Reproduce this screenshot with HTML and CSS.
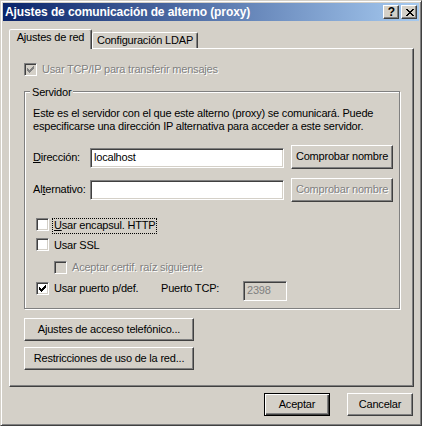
FILE: index.html
```html
<!DOCTYPE html>
<html lang="es">
<head>
<meta charset="utf-8">
<title>Ajustes de comunicación de alterno (proxy)</title>
<link rel="stylesheet" href="styles.css">
</head>
<body>
<div class="window">
  <div class="titlebar">
    <span class="title">Ajustes de comunicación de alterno (proxy)</span>
    <div class="cap-btns">
      <span class="cap-btn help">?</span>
      <span class="cap-btn close">
        <svg width="8" height="7" viewBox="0 0 8 7" shape-rendering="crispEdges"><path d="M0 0h2v1h-2zM6 0h2v1h-2zM1 1h2v1h-2zM5 1h2v1h-2zM2 2h4v1h-4zM3 3h2v1h-2zM2 4h4v1h-4zM1 5h2v1h-2zM5 5h2v1h-2zM0 6h2v1h-2zM6 6h2v1h-2z" fill="#000"/></svg>
      </span>
    </div>
  </div>
  <div class="client">
    <div class="tabs">
      <div class="tab active">Ajustes de red</div>
      <div class="tab second">Configuración LDAP</div>
    </div>
    <div class="panel">
      <div class="check disabled tcpip">
        <span class="box"><svg viewBox="1 1 11 11" shape-rendering="crispEdges"><path d="M9 3h1v1h-1zM8 4h2v1h-2zM3 5h1v1h-1zM7 5h3v1h-3zM3 6h2v1h-2zM6 6h3v1h-3zM3 7h5v1h-5zM4 8h3v1h-3zM5 9h1v1h-1z"/></svg></span>
        <span class="lbl">Usar TCP/IP para transferir mensajes</span>
      </div>
      <div class="group">
        <span class="legend">Servidor</span>
        <p class="desc">Este es el servidor con el que este alterno (proxy) se comunicará. Puede<br>especificarse una dirección IP alternativa para acceder a este servidor.</p>
        <div class="field-row row1">
          <span class="field-label"><u>D</u>irección:</span>
          <span class="textbox">localhost</span>
          <span class="btn check-btn">Comprobar nombre</span>
        </div>
        <div class="field-row row2">
          <span class="field-label">Al<u>t</u>ernativo:</span>
          <span class="textbox"></span>
          <span class="btn check-btn disabled">Comprobar nombre</span>
        </div>
        <div class="check opt http">
          <span class="box"></span>
          <span class="lbl focus"><u>U</u>sar encapsul. HTTP</span>
        </div>
        <div class="check opt ssl">
          <span class="box"></span>
          <span class="lbl">Usar SSL</span>
        </div>
        <div class="check opt cert disabled">
          <span class="box"></span>
          <span class="lbl">Aceptar certif. raíz siguiente</span>
        </div>
        <div class="check opt port">
          <span class="box"><svg viewBox="1 1 11 11" shape-rendering="crispEdges"><path d="M9 3h1v1h-1zM8 4h2v1h-2zM3 5h1v1h-1zM7 5h3v1h-3zM3 6h2v1h-2zM6 6h3v1h-3zM3 7h5v1h-5zM4 8h3v1h-3zM5 9h1v1h-1z"/></svg></span>
          <span class="lbl port-lbl">Usar puerto p/def.</span>
          <span class="tcp-lbl">Puerto TCP:</span>
          <span class="textbox tcp disabled">2398</span>
        </div>
      </div>
      <span class="btn wide first">Ajustes de acceso telefónico...</span>
      <span class="btn wide second">Restricciones de uso de la red...</span>
    </div>
    <div class="footer">
      <span class="btn dlg default">Aceptar</span>
      <span class="btn dlg">Cancelar</span>
    </div>
  </div>
</div>
</body>
</html>
```
FILE: styles.css
```css
* { box-sizing: border-box; }
html, body { margin: 0; padding: 0; }
body {
  background: #d4d0c8;
  font-family: "Liberation Sans", Arial, sans-serif;
  font-size: 11px;
  line-height: 13px;
  color: #000;
  letter-spacing: -0.2px;
}
u { text-decoration: underline; text-underline-offset: 1px; }

.window {
  width: 422px;
  height: 426px;
  padding: 2px;
  background: #d4d0c8;
  border: 1px solid;
  border-color: #d4d0c8 #404040 #404040 #d4d0c8;
  box-shadow: inset 1px 1px #fff, inset -1px -1px #808080;
  display: flex;
  flex-direction: column;
}

.titlebar {
  height: 18px;
  flex: none;
  display: flex;
  align-items: center;
  padding: 0 2px;
  background: linear-gradient(to right, #0a246a, #a6caf0);
}
.title {
  flex: 1;
  color: #fff;
  font-weight: bold;
  font-size: 12px;
  line-height: 18px;
  letter-spacing: -0.1px;
  white-space: nowrap;
}
.cap-btns { display: flex; gap: 2px; }
.cap-btn {
  width: 16px;
  height: 14px;
  background: #d4d0c8;
  border: 1px solid;
  border-color: #fff #404040 #404040 #fff;
  box-shadow: inset -1px -1px #808080;
  display: flex;
  align-items: center;
  justify-content: center;
}
.cap-btn.help { font-weight: bold; font-size: 12px; line-height: 12px; letter-spacing: 0; padding-left: 1px; }
.cap-btn svg { display: block; margin-left: 1px; }

.client {
  flex: 1;
  display: flex;
  flex-direction: column;
  padding: 8px 5px 7px 6px;
}

.tabs { display: flex; height: 20px; flex: none; align-items: flex-end; }
.tab {
  height: 17px;
  padding-top: 1px;
  text-align: center;
  background: #d4d0c8;
  border: 1px solid;
  border-bottom: none;
  border-color: #fff #404040 transparent #fff;
  box-shadow: inset -1px 0 #808080;
  border-radius: 2px 2px 0 0;
  white-space: nowrap;
}
.tab.active { height: 20px; width: 83px; position: relative; z-index: 1; }
.tab.second { width: 106px; }

.panel {
  flex: 1;
  margin-top: -1px;
  border: 1px solid;
  border-color: #fff #404040 #404040 #fff;
  box-shadow: inset -1px -1px #808080;
  padding: 13px 13px 0 14px;
  display: flex;
  flex-direction: column;
  align-items: flex-start;
}

.check { display: flex; align-items: flex-start; }
.box {
  width: 13px;
  height: 13px;
  flex: none;
  margin-top: 1px;
  background: #fff;
  border: 1px solid;
  border-color: #808080 #fff #fff #808080;
  box-shadow: inset 1px 1px #404040, inset -1px -1px #d4d0c8;
}
.box svg { display: block; width: 11px; height: 11px; fill: #000; }
.check.disabled .box { background: #d4d0c8; }
.check.disabled .box svg { fill: #808080; }
.lbl {
  margin-left: 3px;
  border: 1px dotted transparent;
  padding: 0 1px 1px 1px;
  white-space: nowrap;
}
.lbl.focus { border-color: #000; }
.disabled .lbl, .btn.disabled, .textbox.disabled {
  color: #808080;
}
.disabled .lbl, .btn.disabled { text-shadow: 1px 1px 0 #fff; }

.group {
  position: relative;
  width: 376px;
  margin-top: 13px;
  border: 1px solid #808080;
  box-shadow: inset 1px 1px #fff, 1px 1px #fff;
  padding: 15px 0 7px 8px;
}
.legend {
  position: absolute;
  left: 5px;
  top: -6px;
  padding: 0 2px;
  background: #d4d0c8;
}
.desc { margin: 0; white-space: nowrap; }

.field-row { display: flex; align-items: flex-start; height: 24px; }
.field-row.row1 { margin-top: 12px; }
.field-row.row2 { margin-top: 9px; }
.field-label { width: 57px; margin-top: 6px; }
.row2 .field-label { margin-top: 5px; }
.textbox {
  width: 194px;
  height: 20px;
  margin-top: 3px;
  background: #fff;
  border: 1px solid;
  border-color: #808080 #fff #fff #808080;
  box-shadow: inset 1px 1px #404040, inset -1px -1px #d4d0c8;
  padding: 2px 3px;
  white-space: nowrap;
}
.row2 .textbox { margin-top: 2px; }
.textbox.disabled { background: #d4d0c8; }

.btn {
  height: 23px;
  background: #d4d0c8;
  border: 1px solid;
  border-color: #fff #404040 #404040 #fff;
  box-shadow: inset -1px -1px #808080;
  display: flex;
  align-items: center;
  justify-content: center;
  padding-bottom: 1px;
  white-space: nowrap;
}
.check-btn { width: 102px; height: 24px; margin-left: 7px; }
.btn.default {
  border-color: #000;
  box-shadow: inset 1px 1px #fff, inset -1px -1px #404040, inset -2px -2px #808080;
}

.check.opt { margin-left: 3px; }
.check.http { margin-top: 16px; }
.check.ssl { margin-top: 4px; }
.check.cert { margin-top: 6px; margin-left: 21px; }
.check.port { margin-top: 5px; }
.port-lbl { width: 109px; }
.tcp-lbl { width: 82px; margin-top: 1px; }
.textbox.tcp { width: 44px; margin-top: 0; }
.check.opt .box { margin-top: 1px; }
.check.http .box, .check.ssl .box { margin-top: 0; }

.btn.wide { width: 170px; }
.btn.wide.first { margin-top: 9px; }
.btn.wide.second { margin-top: 6px; }

.footer {
  display: flex;
  justify-content: flex-end;
  gap: 17px;
  margin-top: 6px;
  padding-right: 1px;
  flex: none;
}
.btn.dlg { width: 66px; }
```
